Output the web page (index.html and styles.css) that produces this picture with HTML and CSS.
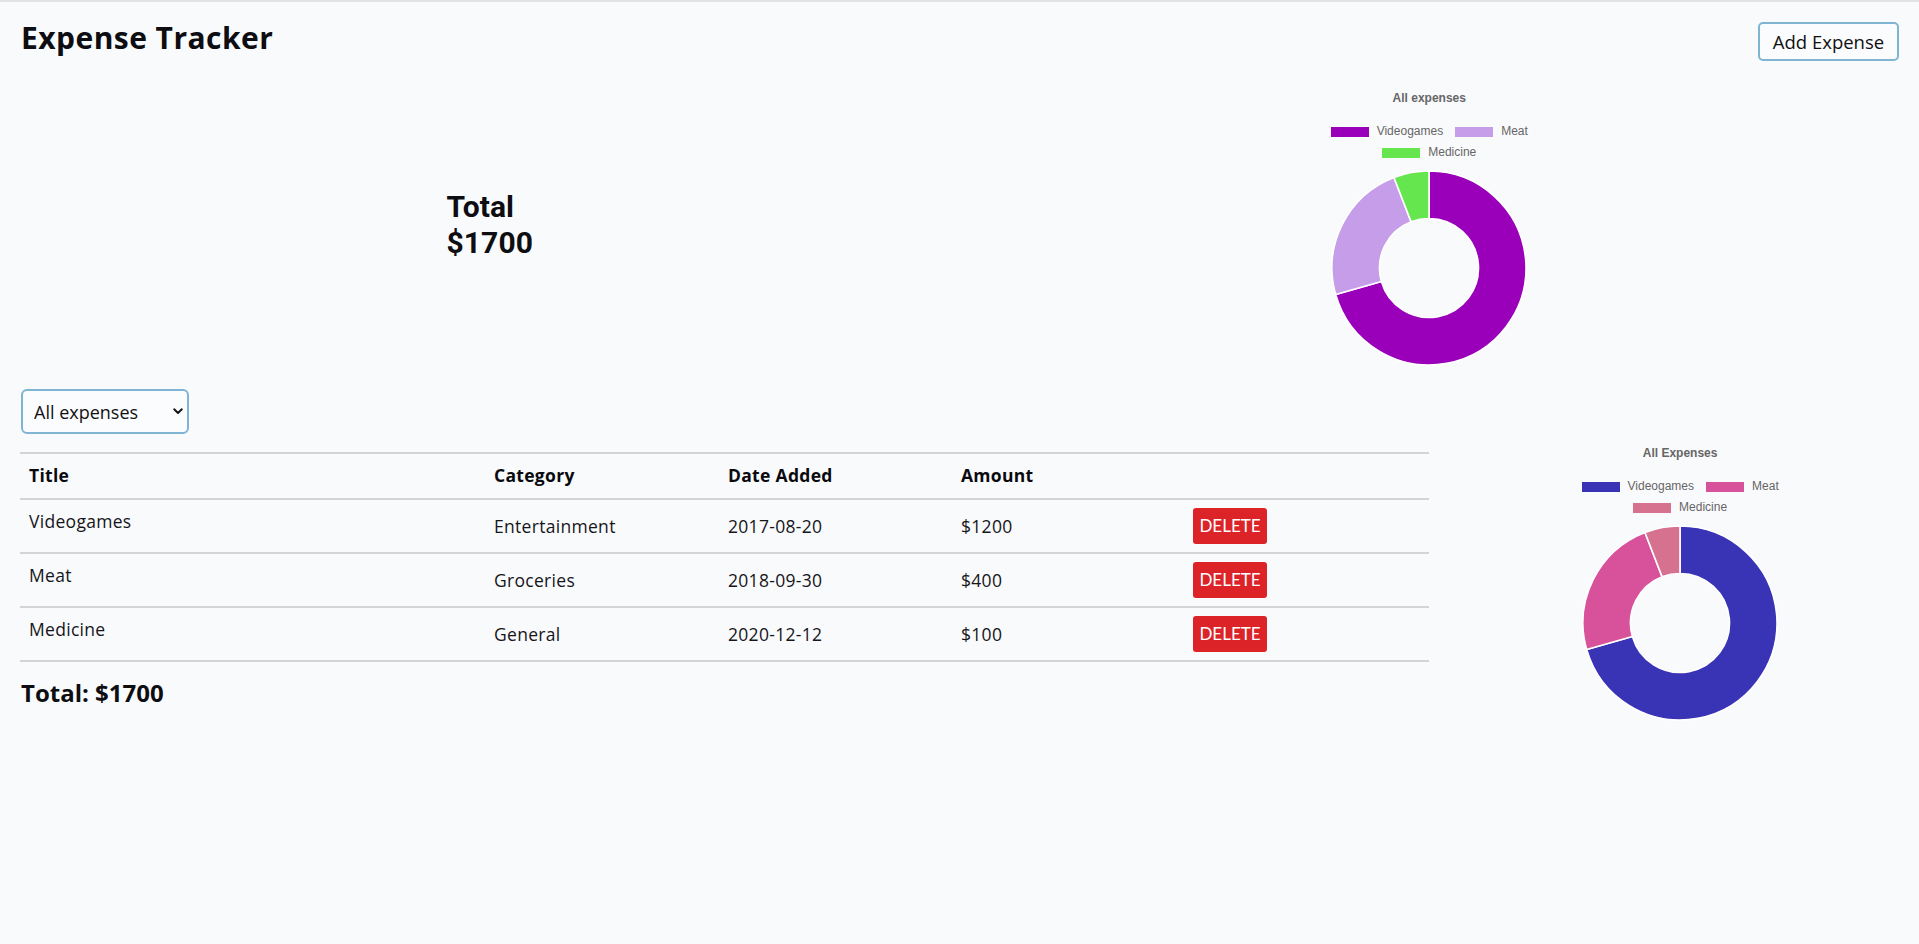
FILE: index.html
```html
<!DOCTYPE html>
<html lang="en">
<head>
<meta charset="utf-8">
<title>Expense Tracker</title>
<link rel="stylesheet" href="styles.css">
</head>
<body>
<div class="app">
  <header class="topbar">
    <h1 class="brand">Expense Tracker</h1>
    <button class="btn-outline" type="button">Add Expense</button>
  </header>

  <section class="summary">
    <div class="summary-cell">
      <h2 class="total-big"><span class="tb-line">Total</span><span class="tb-line">$1700</span></h2>
    </div>
    <div class="summary-cell">
      <div class="chart">
        <div class="chart-title">All expenses</div>
        <div class="legend">
          <span class="legend-item"><span class="swatch sw-purple"></span>Videogames</span>
          <span class="legend-item"><span class="swatch sw-lavender"></span>Meat</span>
          <span class="legend-item"><span class="swatch sw-green"></span>Medicine</span>
        </div>
        <svg class="donut" width="196" height="196" viewBox="0 0 196 196">
          <path class="slice" fill="#9a00ba" d="M98 1 A97 97 0 1 1 4.70 124.55 L50.39 111.55 A49.5 49.5 0 1 0 98 48.5 Z"/>
          <path class="slice" fill="#c69de8" d="M4.70 124.55 A97 97 0 0 1 62.96 7.55 L80.12 51.84 A49.5 49.5 0 0 0 50.39 111.55 Z"/>
          <path class="slice" fill="#66e64e" d="M62.96 7.55 A97 97 0 0 1 98 1 L98 48.5 A49.5 49.5 0 0 0 80.12 51.84 Z"/>
        </svg>
      </div>
    </div>
  </section>

  <section class="details">
    <div class="main">
      <div class="select-wrap">
        <select class="filter">
          <option>All expenses</option>
          <option>Entertainment</option>
          <option>Groceries</option>
          <option>General</option>
        </select>
        <svg class="chevron" width="10" height="7" viewBox="0 0 10 7"><path d="M1.2 1.3 L5 5 L8.8 1.3" fill="none" stroke="#111" stroke-width="1.9" stroke-linecap="round" stroke-linejoin="round"/></svg>
      </div>

      <table class="expenses">
        <colgroup>
          <col class="c-title"><col class="c-cat"><col class="c-date"><col class="c-amt"><col class="c-act">
        </colgroup>
        <thead>
          <tr><th>Title</th><th>Category</th><th>Date Added</th><th>Amount</th><th></th></tr>
        </thead>
        <tbody>
          <tr><td class="cell-title">Videogames</td><td>Entertainment</td><td>2017-08-20</td><td>$1200</td><td><button class="btn-delete" type="button">DELETE</button></td></tr>
          <tr><td class="cell-title">Meat</td><td>Groceries</td><td>2018-09-30</td><td>$400</td><td><button class="btn-delete" type="button">DELETE</button></td></tr>
          <tr><td class="cell-title">Medicine</td><td>General</td><td>2020-12-12</td><td>$100</td><td><button class="btn-delete" type="button">DELETE</button></td></tr>
        </tbody>
      </table>

      <h3 class="total-small">Total: $1700</h3>
    </div>

    <aside class="side">
      <div class="chart">
        <div class="chart-title">All Expenses</div>
        <div class="legend">
          <span class="legend-item"><span class="swatch sw-blue"></span>Videogames</span>
          <span class="legend-item"><span class="swatch sw-pink"></span>Meat</span>
          <span class="legend-item"><span class="swatch sw-rose"></span>Medicine</span>
        </div>
        <svg class="donut" width="196" height="196" viewBox="0 0 196 196">
          <path class="slice" fill="#3933b6" d="M98 1 A97 97 0 1 1 4.70 124.55 L50.39 111.55 A49.5 49.5 0 1 0 98 48.5 Z"/>
          <path class="slice" fill="#d8519b" d="M4.70 124.55 A97 97 0 0 1 62.96 7.55 L80.12 51.84 A49.5 49.5 0 0 0 50.39 111.55 Z"/>
          <path class="slice" fill="#d6718f" d="M62.96 7.55 A97 97 0 0 1 98 1 L98 48.5 A49.5 49.5 0 0 0 80.12 51.84 Z"/>
        </svg>
      </div>
    </aside>
  </section>
</div>
</body>
</html>
```

FILE: styles.css
```css
* { box-sizing: border-box; }

html, body {
  margin: 0;
  padding: 0;
  background: #f9fafc;
}

body {
  border-top: 2px solid #e1e2e4;
  font-family: "Open Sans", "Noto Sans", sans-serif;
  color: #0d0d12;
  min-height: 944px;
}

.app {
  padding: 0 20px;
}

/* header */
.topbar {
  display: flex;
  justify-content: space-between;
  align-items: flex-start;
  padding-top: 20px;
}

.brand {
  margin: -2px 0 0 1px;
  font-size: 30px;
  line-height: 36px;
  font-weight: 700;
  letter-spacing: 0.45px;
}

.btn-outline {
  width: 141px;
  height: 39px;
  padding: 0;
  border: 2px solid #7fb5d3;
  border-radius: 5px;
  background: #fbfcfe;
  font-family: "Open Sans", "Noto Sans", sans-serif;
  font-size: 18.5px;
  color: #111;
}

/* summary row */
.summary {
  display: grid;
  grid-template-columns: 1fr 1fr;
  align-items: center;
  justify-items: center;
  margin-top: 21px;
}

.total-big {
  margin: 0 0 4px 0;
  font-family: Roboto, "Open Sans", sans-serif;
  font-size: 30px;
  font-weight: 700;
  letter-spacing: 0.1px;
}

.tb-line {
  display: block;
  height: 36px;
  line-height: 36px;
}

/* chart */
.chart {
  width: 290px;
  height: 290px;
  display: flex;
  flex-direction: column;
  align-items: center;
  font-family: "Liberation Sans", Arial, sans-serif;
  color: #666;
}

.chart-title {
  margin-top: 10px;
  font-size: 12px;
  line-height: 12px;
  font-weight: 700;
}

.legend {
  margin-top: 17px;
  width: 210px;
  display: flex;
  flex-wrap: wrap;
  justify-content: center;
  column-gap: 12px;
  font-size: 12px;
}

.legend-item {
  display: inline-flex;
  align-items: center;
  height: 21px;
  line-height: 21px;
}

.swatch {
  display: inline-block;
  width: 38px;
  height: 10px;
  margin-right: 8px;
}

.sw-purple { background: #9a00ba; }
.sw-lavender { background: #c69de8; }
.sw-green { background: #66e64e; }
.sw-blue { background: #3933b6; }
.sw-pink { background: #d8519b; }
.sw-rose { background: #d6718f; }

.donut {
  margin-top: 7px;
  display: block;
}

.slice {
  stroke: #ffffff;
  stroke-width: 1.6;
  stroke-linejoin: round;
}

/* details */
.details {
  display: grid;
  grid-template-columns: 3fr 1fr;
  align-items: start;
  margin-top: 17px;
}

.select-wrap {
  position: relative;
  width: 168px;
  height: 45px;
  margin-left: 1px;
}

.filter {
  appearance: none;
  -webkit-appearance: none;
  width: 168px;
  height: 45px;
  padding: 0 0 0 11px;
  border: 2px solid #7fb5d3;
  border-radius: 6px;
  background: #fbfcfe;
  font-family: "Open Sans", "Noto Sans", sans-serif;
  font-size: 18px;
  color: #111;
}

.chevron {
  position: absolute;
  right: 6px;
  top: 19px;
  pointer-events: none;
}

.expenses {
  width: 100%;
  margin-top: 18px;
  border-collapse: collapse;
  table-layout: fixed;
  font-size: 17.5px;
}

.c-title { width: 465px; }
.c-cat { width: 234px; }
.c-date { width: 233px; }
.c-amt { width: 232px; }

.expenses th,
.expenses td {
  border-top: 2px solid #d3d4d7;
  padding: 8px 9px;
  text-align: left;
  line-height: 28px;
  vertical-align: middle;
}

.expenses th {
  font-weight: 700;
  color: #0a0a0e;
  letter-spacing: 0.3px;
  padding-top: 7px;
  padding-bottom: 9px;
}

.expenses td {
  font-weight: 400;
  color: #15151a;
  letter-spacing: 0.3px;
}

.expenses tbody tr:last-child td {
  border-bottom: 2px solid #d3d4d7;
}

.expenses td.cell-title {
  vertical-align: top;
  padding-top: 7px;
}

.btn-delete {
  display: block;
  width: 74px;
  height: 36px;
  margin-left: 0;
  padding: 0;
  border: none;
  border-radius: 3px;
  background: #dc2328;
  color: #fff;
  font-family: Lato, "Open Sans", sans-serif;
  font-size: 17px;
  line-height: 36px;
  text-align: center;
}

.total-small {
  margin: 16px 0 0 1px;
  font-size: 24px;
  line-height: 29px;
  font-weight: 700;
}

.side {
  display: flex;
  justify-content: center;
  padding-left: 32px;
  margin-top: 48px;
}
```
